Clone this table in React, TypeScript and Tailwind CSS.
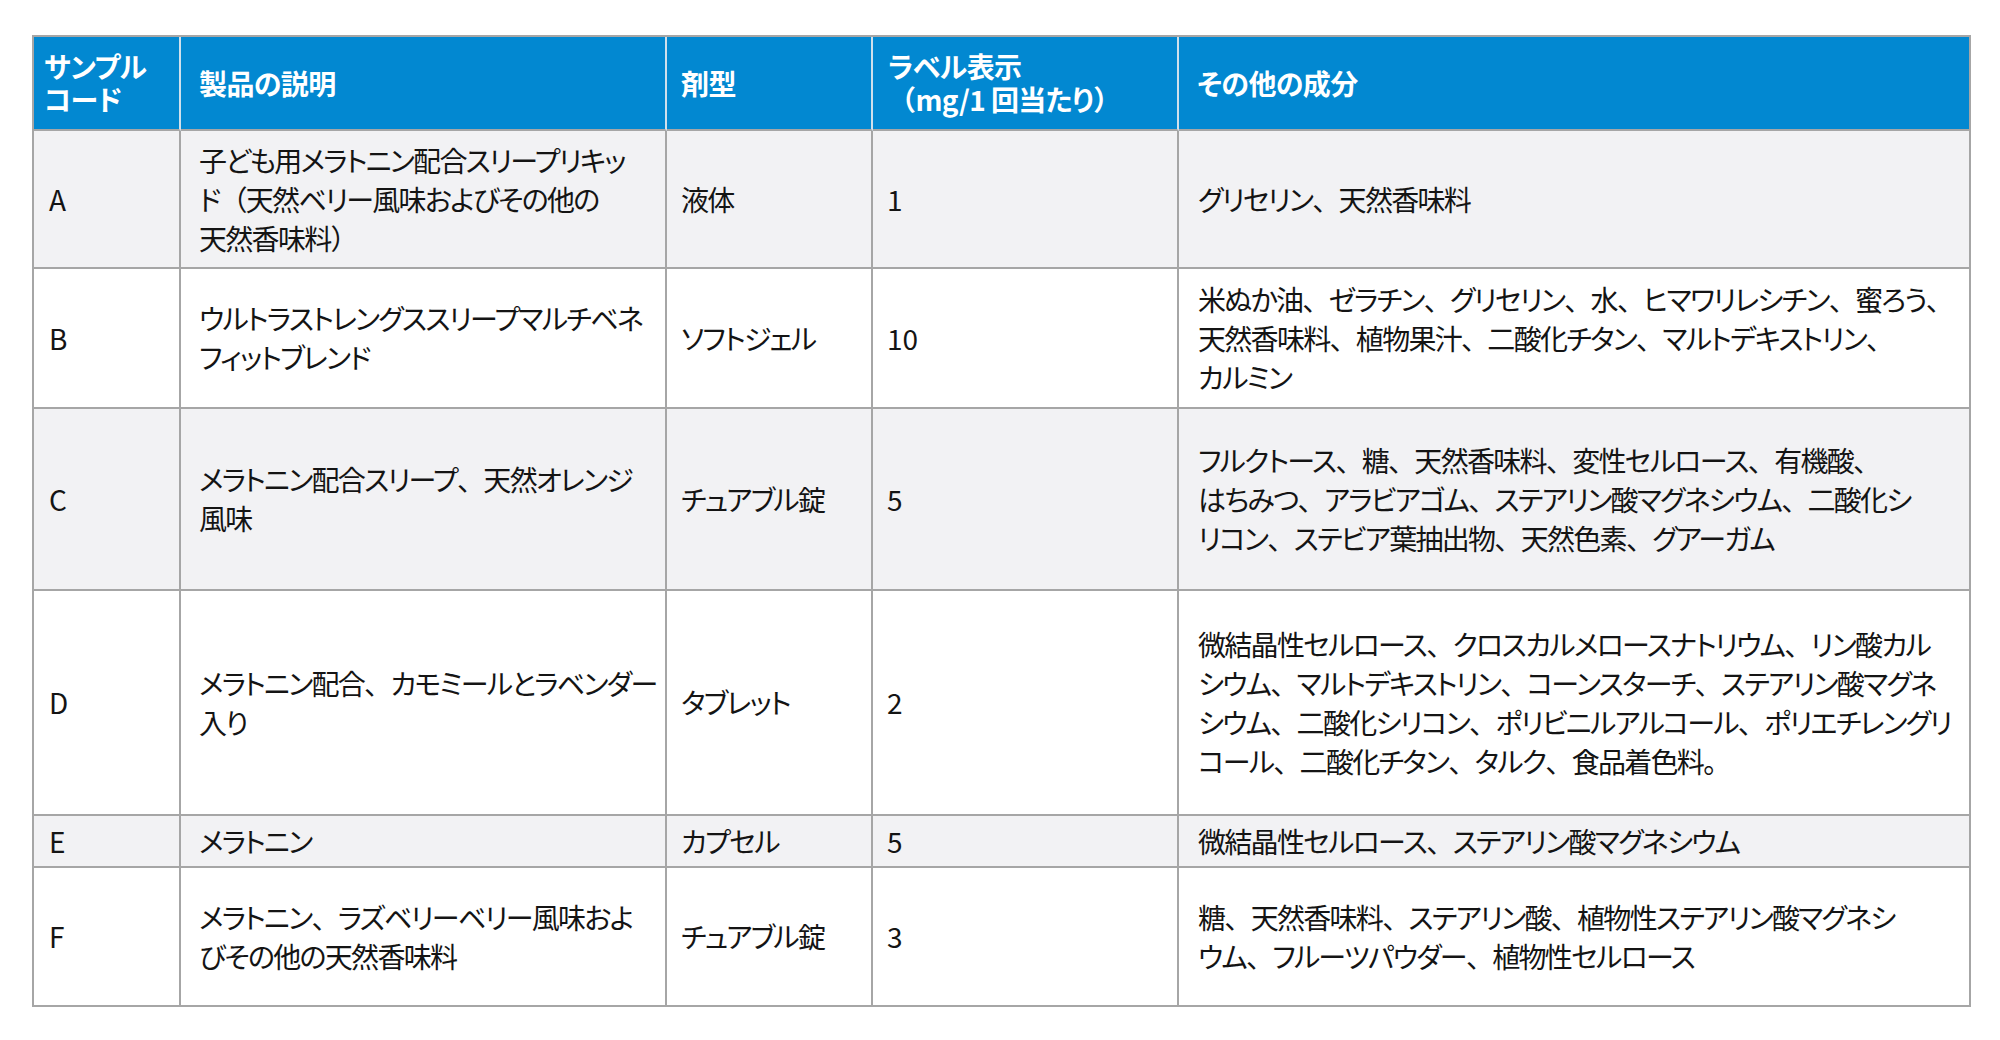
import React from "react";

type Row = {
  code: string;
  desc: string[];
  form: string;
  mg: string;
  other: string[];
  h: string;
  gray: boolean;
};

const rows: Row[] = [
  {
    code: "A",
    desc: ["子ども用メラトニン配合スリープリキッ", "ド（天然ベリー風味およびその他の", "天然香味料）"],
    form: "液体",
    mg: "1",
    other: ["グリセリン、天然香味料"],
    h: "h-[138px]",
    gray: true,
  },
  {
    code: "B",
    desc: ["ウルトラストレングススリープマルチベネ", "フィットブレンド"],
    form: "ソフトジェル",
    mg: "10",
    other: [
      "米ぬか油、ゼラチン、グリセリン、水、ヒマワリレシチン、蜜ろう、",
      "天然香味料、植物果汁、二酸化チタン、マルトデキストリン、",
      "カルミン",
    ],
    h: "h-[140px]",
    gray: false,
  },
  {
    code: "C",
    desc: ["メラトニン配合スリープ、天然オレンジ", "風味"],
    form: "チュアブル錠",
    mg: "5",
    other: [
      "フルクトース、糖、天然香味料、変性セルロース、有機酸、",
      "はちみつ、アラビアゴム、ステアリン酸マグネシウム、二酸化シ",
      "リコン、ステビア葉抽出物、天然色素、グアーガム",
    ],
    h: "h-[182px]",
    gray: true,
  },
  {
    code: "D",
    desc: ["メラトニン配合、カモミールとラベンダー", "入り"],
    form: "タブレット",
    mg: "2",
    other: [
      "微結晶性セルロース、クロスカルメロースナトリウム、リン酸カル",
      "シウム、マルトデキストリン、コーンスターチ、ステアリン酸マグネ",
      "シウム、二酸化シリコン、ポリビニルアルコール、ポリエチレングリ",
      "コール、二酸化チタン、タルク、食品着色料。",
    ],
    h: "h-[225px]",
    gray: false,
  },
  {
    code: "E",
    desc: ["メラトニン"],
    form: "カプセル",
    mg: "5",
    other: ["微結晶性セルロース、ステアリン酸マグネシウム"],
    h: "h-[52px]",
    gray: true,
  },
  {
    code: "F",
    desc: ["メラトニン、ラズベリーベリー風味およ", "びその他の天然香味料"],
    form: "チュアブル錠",
    mg: "3",
    other: [
      "糖、天然香味料、ステアリン酸、植物性ステアリン酸マグネシ",
      "ウム、フルーツパウダー、植物性セルロース",
    ],
    h: "h-[139px]",
    gray: false,
  },
];

// Full-width punctuation keeps its full advance (as in the reference font)
function Jp({ text }: { text: string }) {
  const parts = text.split(/([、（）。])/);
  return (
    <>
      {parts.map((p, i) =>
        /^[、（）。]$/.test(p) ? (
          <span key={i} className="[font-feature-settings:normal]">
            {p}
          </span>
        ) : (
          <React.Fragment key={i}>{p}</React.Fragment>
        )
      )}
    </>
  );
}

function Lines({ lines }: { lines: string[] }) {
  return (
    <div className="flex flex-col">
      {lines.map((l, i) => (
        <span key={i} className="block whitespace-nowrap">
          <Jp text={l} />
        </span>
      ))}
    </div>
  );
}

const thBase =
  "border-r-2 border-b-2 border-b-[#a6a6a6] align-middle text-left font-bold text-white text-[28px] leading-[33px] tracking-[-0.6px]";
const tdBase =
  "border-r-2 border-b-2 border-[#a6a6a6] align-middle text-left text-[#141414] py-0";
const jpText = "text-[28px] leading-[39px] tracking-[-1.7px]";
const latinText = "text-[28px] leading-[39px]";

export default function App() {
  return (
    <div className="min-h-screen w-full bg-white pt-[35px] pl-[32px] font-['Noto_Sans_CJK_JP','Noto_Sans',sans-serif] [font-feature-settings:'palt']">
      <table className="table-fixed border-separate border-spacing-0 border-l-2 border-t-2 border-[#a6a6a6] w-[1937px]">
        <colgroup>
          <col className="w-[147px]" />
          <col className="w-[486px]" />
          <col className="w-[206px]" />
          <col className="w-[306px]" />
          <col className="w-[792px]" />
        </colgroup>
        <thead>
          <tr className="h-[94px] bg-[#0288d1]">
            <th className={`${thBase} border-r-[#cfe0ec] px-[10px]`}>
              <Lines lines={["サンプル", "コード"]} />
            </th>
            <th className={`${thBase} border-r-[#cfe0ec] px-[18px]`}>製品の説明</th>
            <th className={`${thBase} border-r-[#cfe0ec] px-[14px]`}>剤型</th>
            <th className={`${thBase} border-r-[#cfe0ec] px-[15px]`}>
              <Lines lines={["ラベル表示", "（mg/1 回当たり）"]} />
            </th>
            <th className={`${thBase} border-r-[#a6a6a6] px-[18px]`}>その他の成分</th>
          </tr>
        </thead>
        <tbody>
          {rows.map((r) => (
            <tr key={r.code} className={`${r.h} ${r.gray ? "bg-[#f2f2f4]" : "bg-white"}`}>
              <td className={`${tdBase} ${latinText} px-[15px]`}>{r.code}</td>
              <td className={`${tdBase} ${jpText} px-[18px]`}>
                <Lines lines={r.desc} />
              </td>
              <td className={`${tdBase} ${jpText} px-[14px]`}>
                <span className="whitespace-nowrap">{r.form}</span>
              </td>
              <td className={`${tdBase} ${latinText} px-[14px]`}>{r.mg}</td>
              <td className={`${tdBase} ${jpText} px-[19px]`}>
                <Lines lines={r.other} />
              </td>
            </tr>
          ))}
        </tbody>
      </table>
    </div>
  );
}
